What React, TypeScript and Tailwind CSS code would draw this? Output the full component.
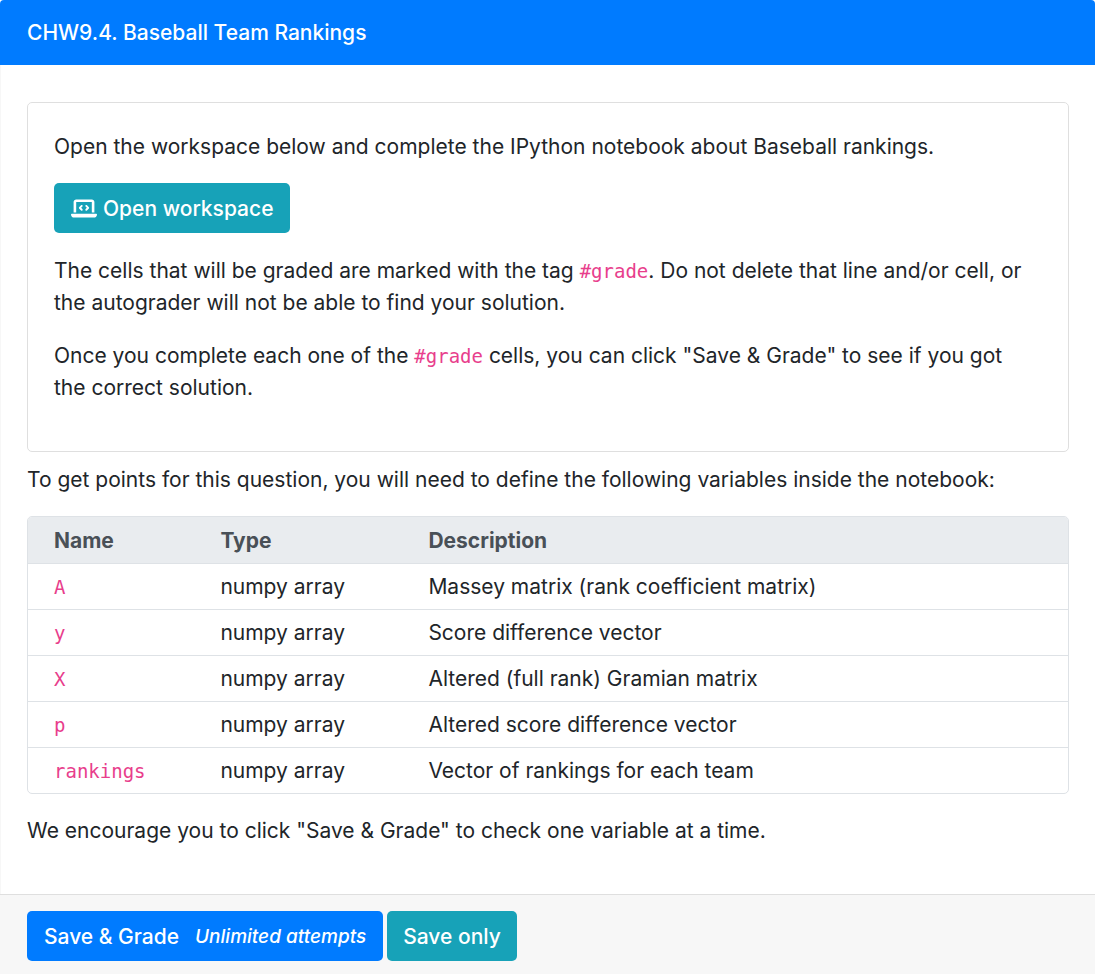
import type { ReactNode } from 'react';
import { FaLaptopCode } from 'react-icons/fa6';

const variables = [
  { name: 'A', type: 'numpy array', description: 'Massey matrix (rank coefficient matrix)' },
  { name: 'y', type: 'numpy array', description: 'Score difference vector' },
  { name: 'X', type: 'numpy array', description: 'Altered (full rank) Gramian matrix' },
  { name: 'p', type: 'numpy array', description: 'Altered score difference vector' },
  { name: 'rankings', type: 'numpy array', description: 'Vector of rankings for each team' },
];

function Code({ children }: { children: ReactNode }) {
  return (
    <code className="font-['DejaVu_Sans_Mono','Liberation_Mono',monospace] text-[19px] leading-none text-[#e83e8c]">
      {children}
    </code>
  );
}

export default function App() {
  return (
    <div className="pr-[3px] pb-[3px] font-['Inter','Liberation_Sans',sans-serif] text-[21px] leading-8 text-[#212529]">
      <main className="overflow-hidden rounded-t-[4px]">
        <header className="bg-[#007bff] px-[27px] pt-[17px] pb-4 font-medium text-white">
          <h1>CHW9.4. Baseball Team Rankings</h1>
        </header>

        <div className="border-l border-[#f7f7f7] px-[26px] pt-[37px] pb-[47px]">
          <section className="rounded-[5px] border border-[#dfdfdf] pt-7 pr-8 pb-[47px] pl-[26px]">
            <p>Open the workspace below and complete the IPython notebook about Baseball rankings.</p>
            <a
              href="#workspace"
              className="mt-5 mb-[22px] inline-flex h-[50px] items-center gap-[6px] rounded-[5px] bg-[#17a2b8] px-[17px] align-top font-medium text-white"
            >
              <FaLaptopCode className="h-[21px] w-[26px]" aria-hidden="true" />
              <span className="pt-px">Open workspace</span>
            </a>
            <p>
              The cells that will be graded are marked with the tag <Code>#grade</Code>. Do not delete that line
              and/or cell, or the autograder will not be able to find your solution.
            </p>
            <p className="mt-[21px]">
              Once you complete each one of the <Code>#grade</Code> cells, you can click "Save &amp; Grade" to see if
              you got the correct solution.
            </p>
          </section>

          <p className="mt-3">
            To get points for this question, you will need to define the following variables inside the notebook:
          </p>

          <div className="mt-5 overflow-hidden rounded-[5px] border border-[#dee2e6]">
            <table className="w-full border-collapse text-left">
              <thead className="bg-[#e9ecef] text-[#495057]">
                <tr>
                  <th className="w-[16%] pt-2 pb-[6px] pl-[26px] font-bold">Name</th>
                  <th className="w-[20%] pt-2 pb-[6px] pl-[26px] font-bold">Type</th>
                  <th className="pt-2 pb-[6px] pl-[26px] font-bold">Description</th>
                </tr>
              </thead>
              <tbody>
                {variables.map((variable) => (
                  <tr key={variable.name} className="border-t border-[#dee2e6]">
                    <td className="pt-[7px] pb-[6px] pl-[26px]">
                      <Code>{variable.name}</Code>
                    </td>
                    <td className="pt-[7px] pb-[6px] pl-[26px]">{variable.type}</td>
                    <td className="pt-[7px] pb-[6px] pl-[26px]">{variable.description}</td>
                  </tr>
                ))}
              </tbody>
            </table>
          </div>

          <p className="mt-[21px]">We encourage you to click "Save &amp; Grade" to check one variable at a time.</p>
        </div>

        <footer className="flex gap-1 border-t border-[#dfdfdf] bg-[#f7f7f7] px-[27px] pt-4 pb-[13px] font-medium">
          <button type="submit" className="flex h-[50px] items-center gap-4 rounded-[5px] bg-[#007bff] px-[17px] pt-px text-white">
            Save &amp; Grade
            <small className="text-[19px] italic">Unlimited attempts</small>
          </button>
          <button type="submit" className="h-[50px] rounded-[5px] bg-[#17a2b8] px-4 pt-px text-white">
            Save only
          </button>
        </footer>
      </main>
    </div>
  );
}
